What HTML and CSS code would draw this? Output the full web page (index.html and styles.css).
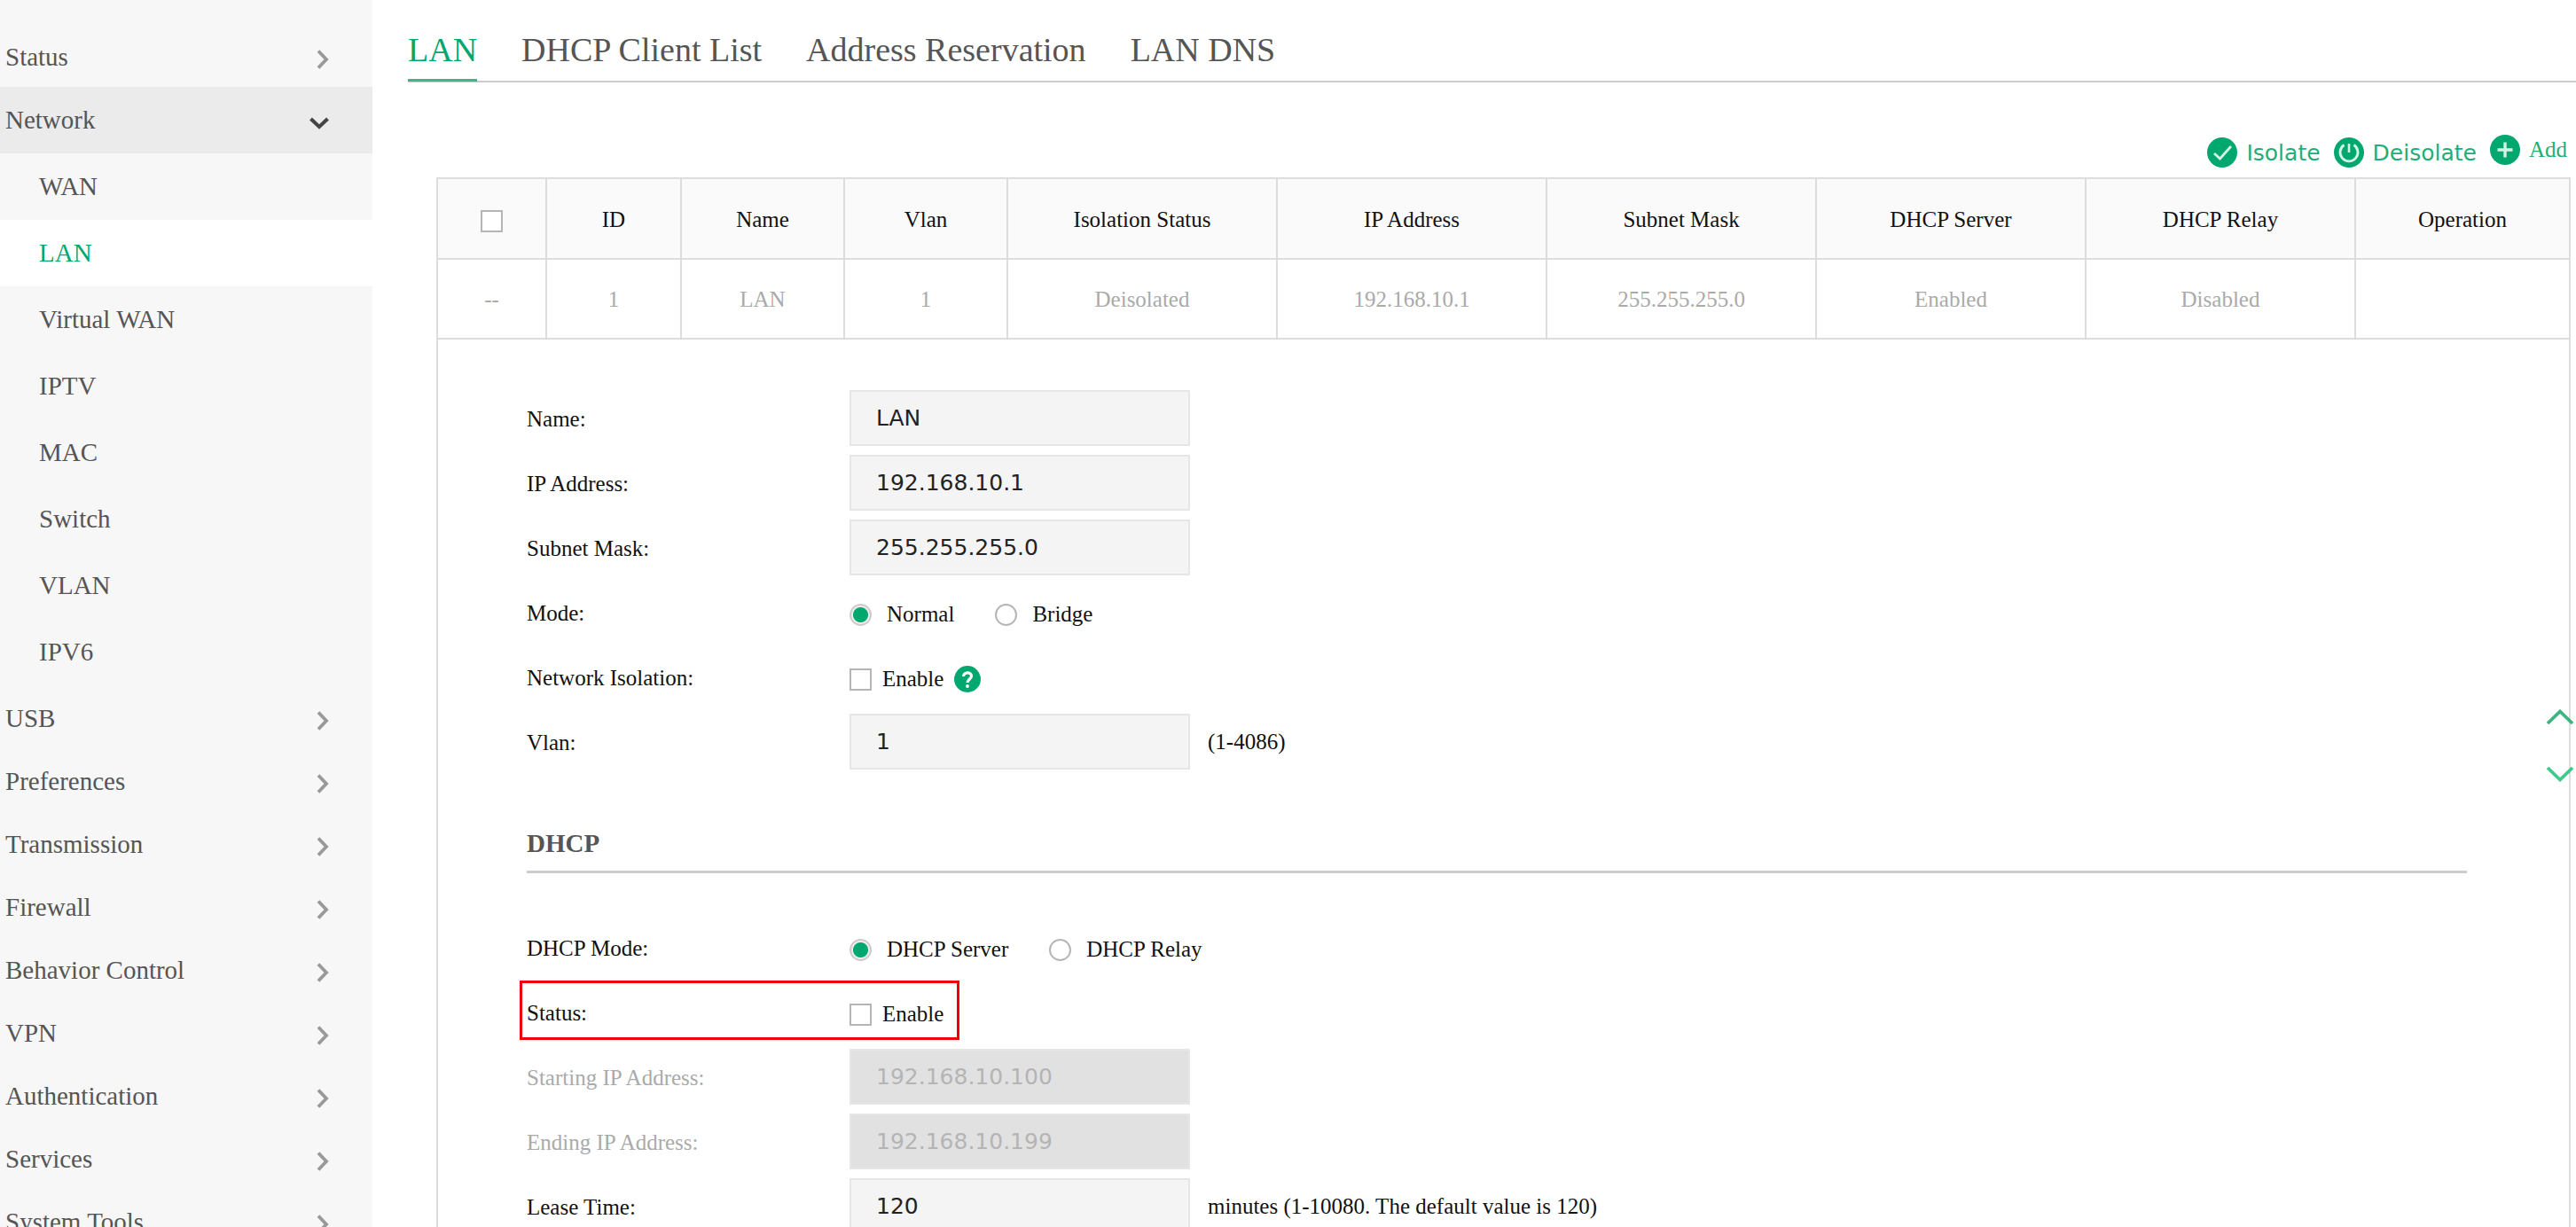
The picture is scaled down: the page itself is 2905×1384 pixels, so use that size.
FILE: index.html
```
<!DOCTYPE html>
<html lang="en">
<head>
    <meta charset="UTF-8">
    <meta name="viewport" content="width=device-width, initial-scale=1.0">
    <title>LAN</title>
    <link rel="stylesheet" href="styles.css">
</head>
<body>
    <svg class="symbols" width="0" height="0" aria-hidden="true">
        <symbol id="chevron-right" viewBox="0 0 14 22">
            <path d="M2 1.5 L11 11 L2 20.5" fill="none" stroke="currentColor" stroke-width="3.8"/>
        </symbol>
        <symbol id="chevron-down" viewBox="0 0 22 14">
            <path d="M1.5 2 L11 11 L20.5 2" fill="none" stroke="currentColor" stroke-width="4"/>
        </symbol>
    </svg>

    <div class="layout">
        <nav class="sidebar">
            <ul class="menu">
                <li><a href="#">Status <svg class="chevron"><use href="#chevron-right"/></svg></a></li>
                <li class="open">
                    <a href="#">Network <svg class="chevron-open"><use href="#chevron-down"/></svg></a>
                    <ul class="submenu">
                        <li><a href="#">WAN</a></li>
                        <li><a href="#" class="active">LAN</a></li>
                        <li><a href="#">Virtual WAN</a></li>
                        <li><a href="#">IPTV</a></li>
                        <li><a href="#">MAC</a></li>
                        <li><a href="#">Switch</a></li>
                        <li><a href="#">VLAN</a></li>
                        <li><a href="#">IPV6</a></li>
                    </ul>
                </li>
                <li><a href="#">USB <svg class="chevron"><use href="#chevron-right"/></svg></a></li>
                <li><a href="#">Preferences <svg class="chevron"><use href="#chevron-right"/></svg></a></li>
                <li><a href="#">Transmission <svg class="chevron"><use href="#chevron-right"/></svg></a></li>
                <li><a href="#">Firewall <svg class="chevron"><use href="#chevron-right"/></svg></a></li>
                <li><a href="#">Behavior Control <svg class="chevron"><use href="#chevron-right"/></svg></a></li>
                <li><a href="#">VPN <svg class="chevron"><use href="#chevron-right"/></svg></a></li>
                <li><a href="#">Authentication <svg class="chevron"><use href="#chevron-right"/></svg></a></li>
                <li><a href="#">Services <svg class="chevron"><use href="#chevron-right"/></svg></a></li>
                <li><a href="#">System Tools <svg class="chevron"><use href="#chevron-right"/></svg></a></li>
            </ul>
        </nav>

        <main class="content">
            <nav class="tabs">
                <a href="#" class="active">LAN</a>
                <a href="#">DHCP Client List</a>
                <a href="#">Address Reservation</a>
                <a href="#">LAN DNS</a>
            </nav>

            <div class="toolbar">
                <button type="button">
                    <svg class="tool-icon" viewBox="0 0 34 34">
                        <circle cx="17" cy="17" r="17" fill="#00a870"/>
                        <path d="M8 18 L14.5 24 L27 10" fill="none" stroke="#d5f2e7" stroke-width="2.8"/>
                    </svg>
                    Isolate
                </button>
                <button type="button">
                    <svg class="tool-icon" viewBox="0 0 34 34">
                        <circle cx="17" cy="17" r="17" fill="#00a870"/>
                        <path d="M11.5 8.5 A10 10 0 1 0 22.5 8.5" fill="none" stroke="#d5f2e7" stroke-width="2.8"/>
                        <path d="M17 7 V17" stroke="#d5f2e7" stroke-width="2.6"/>
                    </svg>
                    Deisolate
                </button>
                <button type="button" class="add">
                    <svg class="tool-icon" viewBox="0 0 34 34">
                        <circle cx="17" cy="17" r="17" fill="#00a870"/>
                        <path d="M8.5 17 H25.5 M17 8.5 V25.5" stroke="#d5f2e7" stroke-width="3.4"/>
                    </svg>
                    Add
                </button>
            </div>

            <section class="panel">
                <table class="lan-table">
                    <colgroup>
                        <col class="col-check">
                        <col class="col-id">
                        <col class="col-short" span="2">
                        <col class="col-long" span="5">
                        <col class="col-operation">
                    </colgroup>
                    <thead>
                        <tr>
                            <th><input type="checkbox" aria-label="Select all"></th>
                            <th>ID</th>
                            <th>Name</th>
                            <th>Vlan</th>
                            <th>Isolation Status</th>
                            <th>IP Address</th>
                            <th>Subnet Mask</th>
                            <th>DHCP Server</th>
                            <th>DHCP Relay</th>
                            <th>Operation</th>
                        </tr>
                    </thead>
                    <tbody>
                        <tr>
                            <td>--</td>
                            <td>1</td>
                            <td>LAN</td>
                            <td>1</td>
                            <td>Deisolated</td>
                            <td>192.168.10.1</td>
                            <td>255.255.255.0</td>
                            <td>Enabled</td>
                            <td>Disabled</td>
                            <td></td>
                        </tr>
                    </tbody>
                </table>

                <form class="lan-form">
                    <div class="form-row">
                        <label class="label" for="name">Name:</label>
                        <input type="text" id="name" value="LAN">
                    </div>
                    <div class="form-row">
                        <label class="label" for="ip">IP Address:</label>
                        <input type="text" id="ip" value="192.168.10.1">
                    </div>
                    <div class="form-row">
                        <label class="label" for="mask">Subnet Mask:</label>
                        <input type="text" id="mask" value="255.255.255.0">
                    </div>
                    <div class="form-row" role="radiogroup" aria-labelledby="mode-label">
                        <span class="label" id="mode-label">Mode:</span>
                        <label class="radio"><input type="radio" name="mode" checked> Normal</label>
                        <label class="radio"><input type="radio" name="mode"> Bridge</label>
                    </div>
                    <div class="form-row">
                        <span class="label">Network Isolation:</span>
                        <label class="check"><input type="checkbox"> Enable</label>
                        <svg class="help" viewBox="0 0 30 30" role="img" aria-label="Help">
                            <circle cx="15" cy="15" r="15" fill="#00a870"/>
                            <path d="M10.5 12 C10.5 6.5 19.5 6.5 19.5 11.5 C19.5 15 15 15 15 19" fill="none" stroke="#fff" stroke-width="3.2"/>
                            <circle cx="15" cy="23" r="1.9" fill="#fff"/>
                        </svg>
                    </div>
                    <div class="form-row">
                        <label class="label" for="vlan">Vlan:</label>
                        <input type="text" id="vlan" value="1">
                        <span class="hint">(1-4086)</span>
                    </div>

                    <h2>DHCP</h2>

                    <div class="form-row" role="radiogroup" aria-labelledby="dhcp-mode-label">
                        <span class="label" id="dhcp-mode-label">DHCP Mode:</span>
                        <label class="radio"><input type="radio" name="dhcp-mode" checked> DHCP Server</label>
                        <label class="radio"><input type="radio" name="dhcp-mode"> DHCP Relay</label>
                    </div>
                    <div class="form-row highlight">
                        <span class="label">Status:</span>
                        <label class="check"><input type="checkbox"> Enable</label>
                    </div>
                    <div class="form-row disabled">
                        <label class="label" for="start-ip">Starting IP Address:</label>
                        <input type="text" id="start-ip" value="192.168.10.100" disabled>
                    </div>
                    <div class="form-row disabled">
                        <label class="label" for="end-ip">Ending IP Address:</label>
                        <input type="text" id="end-ip" value="192.168.10.199" disabled>
                    </div>
                    <div class="form-row">
                        <label class="label" for="lease">Lease Time:</label>
                        <input type="text" id="lease" value="120">
                        <span class="hint">minutes (1-10080. The default value is 120)</span>
                    </div>
                </form>
            </section>
        </main>
    </div>

    <div class="scroll-buttons">
        <button type="button" class="up" aria-label="Scroll up">
            <svg viewBox="0 0 32 18"><path d="M2 16 L16 2.5 L30 16" fill="none" stroke="currentColor" stroke-width="3.8"/></svg>
        </button>
        <button type="button" class="down" aria-label="Scroll down">
            <svg viewBox="0 0 32 18"><path d="M2 2 L16 15.5 L30 2" fill="none" stroke="currentColor" stroke-width="3.8"/></svg>
        </button>
    </div>
</body>
</html>
```
FILE: styles.css
```
* {
    box-sizing: border-box;
}
body {
    margin: 0;
    font-family: "Liberation Serif", "Times New Roman", serif;
    font-size: 25px;
    color: #111;
    background-color: #fff;
}
a {
    color: inherit;
    text-decoration: none;
}
button {
    padding: 0;
    border: none;
    background: none;
    cursor: pointer;
}
ul {
    list-style: none;
    margin: 0;
    padding: 0;
}
.symbols {
    position: absolute;
}
.layout {
    display: flex;
    height: 100vh;
    overflow: hidden;
}

/* Sidebar */
.sidebar {
    flex: 0 0 420px;
    padding-top: 27px;
    background-color: #f7f7f7;
    color: #555;
    font-size: 29px;
}
.menu a {
    display: flex;
    align-items: center;
    justify-content: space-between;
    height: 71px;
    padding: 3px 49px 0 6px;
}
.menu .open > a {
    height: 75px;
    padding-top: 0;
    background-color: #ebebeb;
}
.menu .submenu a {
    height: 75px;
    padding: 0 0 0 44px;
}
.menu .submenu .active {
    background-color: #fff;
    color: #00a870;
}
.chevron {
    width: 14px;
    height: 22px;
    margin-top: 6px;
    color: #999;
}
.chevron-open {
    width: 22px;
    height: 14px;
    margin-top: 6px;
    color: #444;
}

/* Content */
.content {
    flex: 1;
    min-width: 0;
}
.tabs {
    display: flex;
    gap: 50px;
    margin-left: 40px;
    padding-top: 36px;
    border-bottom: 2px solid #ccc;
    font-size: 38px;
    line-height: 40px;
    color: #555;
}
.tabs a {
    padding-bottom: 13px;
    margin-bottom: -1px;
    border-bottom: 3px solid transparent;
}
.tabs .active {
    color: #00a870;
    border-bottom-color: #41b58a;
}
.toolbar {
    display: flex;
    justify-content: flex-end;
    align-items: flex-end;
    gap: 15px;
    height: 107px;
    padding: 0 10px 11px 0;
}
.toolbar button {
    display: flex;
    align-items: center;
    gap: 10px;
    font-family: Verdana, "DejaVu Sans", sans-serif;
    font-size: 25px;
    color: #1fae78;
}
.toolbar .add {
    padding-bottom: 3px;
    font-family: inherit;
}
.tool-icon {
    width: 34px;
    height: 34px;
}
.panel {
    margin: 0 6px 0 72px;
    border: 2px solid #ddd;
    border-bottom: none;
}
.lan-table {
    width: 100%;
    table-layout: fixed;
    border-collapse: collapse;
}
.lan-table th,
.lan-table td {
    height: 90px;
    padding: 2px 0 0;
    border-bottom: 2px solid #ddd;
    text-align: center;
    font-weight: normal;
}
.lan-table th + th,
.lan-table td + td {
    border-left: 2px solid #ddd;
}
.lan-table th {
    background-color: #fafafa;
}
.lan-table td {
    color: #aaa;
}
.col-check {
    width: 122px;
}
.col-id {
    width: 152px;
}
.col-short {
    width: 184px;
}
.col-long {
    width: 304px;
}
.col-operation {
    width: 241px;
}

/* Form */
.lan-form {
    padding: 57px 115px 0 100px;
}
.form-row {
    display: flex;
    align-items: center;
    height: 63px;
    margin-bottom: 10px;
}
.label {
    width: 364px;
    padding-top: 2px;
}
.hint {
    margin-left: 20px;
}
input[type="text"] {
    width: 384px;
    height: 63px;
    padding: 0 28px;
    border: 2px solid #e6e6e6;
    border-radius: 0;
    background-color: #f4f4f4;
    font-family: Verdana, "DejaVu Sans", sans-serif;
    font-size: 25px;
    color: #222;
}
input[type="text"]:disabled {
    background-color: #e1e1e1;
    color: #b4b4b4;
}
.disabled {
    color: #aaa;
}
input[type="checkbox"],
input[type="radio"] {
    appearance: none;
    width: 25px;
    height: 25px;
    margin: 0;
    border: 2px solid #b5b5b5;
    background-color: #fff;
}
input[type="radio"] {
    border-radius: 50%;
}
input[type="radio"]:checked {
    border-color: #ccc;
    background: radial-gradient(circle, #00a870 8px, #eee 9px);
}
.lan-table input[type="checkbox"] {
    display: block;
    margin: 4px auto 0;
}
.radio,
.check {
    display: flex;
    align-items: center;
    padding-top: 5px;
}
.radio {
    gap: 17px;
    margin-right: 46px;
}
.check {
    gap: 12px;
}
.help {
    width: 30px;
    height: 30px;
    margin: 5px 0 0 12px;
}
h2 {
    margin: 0 0 52px;
    padding: 56px 0 14px;
    border-bottom: 3px solid #ccc;
    font-size: 29px;
    line-height: 34px;
    color: #555;
}
/* Red frame around the setting to change */
.highlight {
    position: relative;
}
.highlight::after {
    content: "";
    position: absolute;
    top: -4px;
    bottom: 0;
    left: -8px;
    width: 490px;
    border: 3px solid #f0000a;
    pointer-events: none;
}

.scroll-buttons {
    position: fixed;
    top: 800px;
    right: 2px;
    display: flex;
    flex-direction: column;
    gap: 46px;
}
.scroll-buttons svg {
    display: block;
    width: 32px;
    height: 18px;
}
.up {
    color: #3db583;
}
.down {
    color: #3fc98a;
}
```
